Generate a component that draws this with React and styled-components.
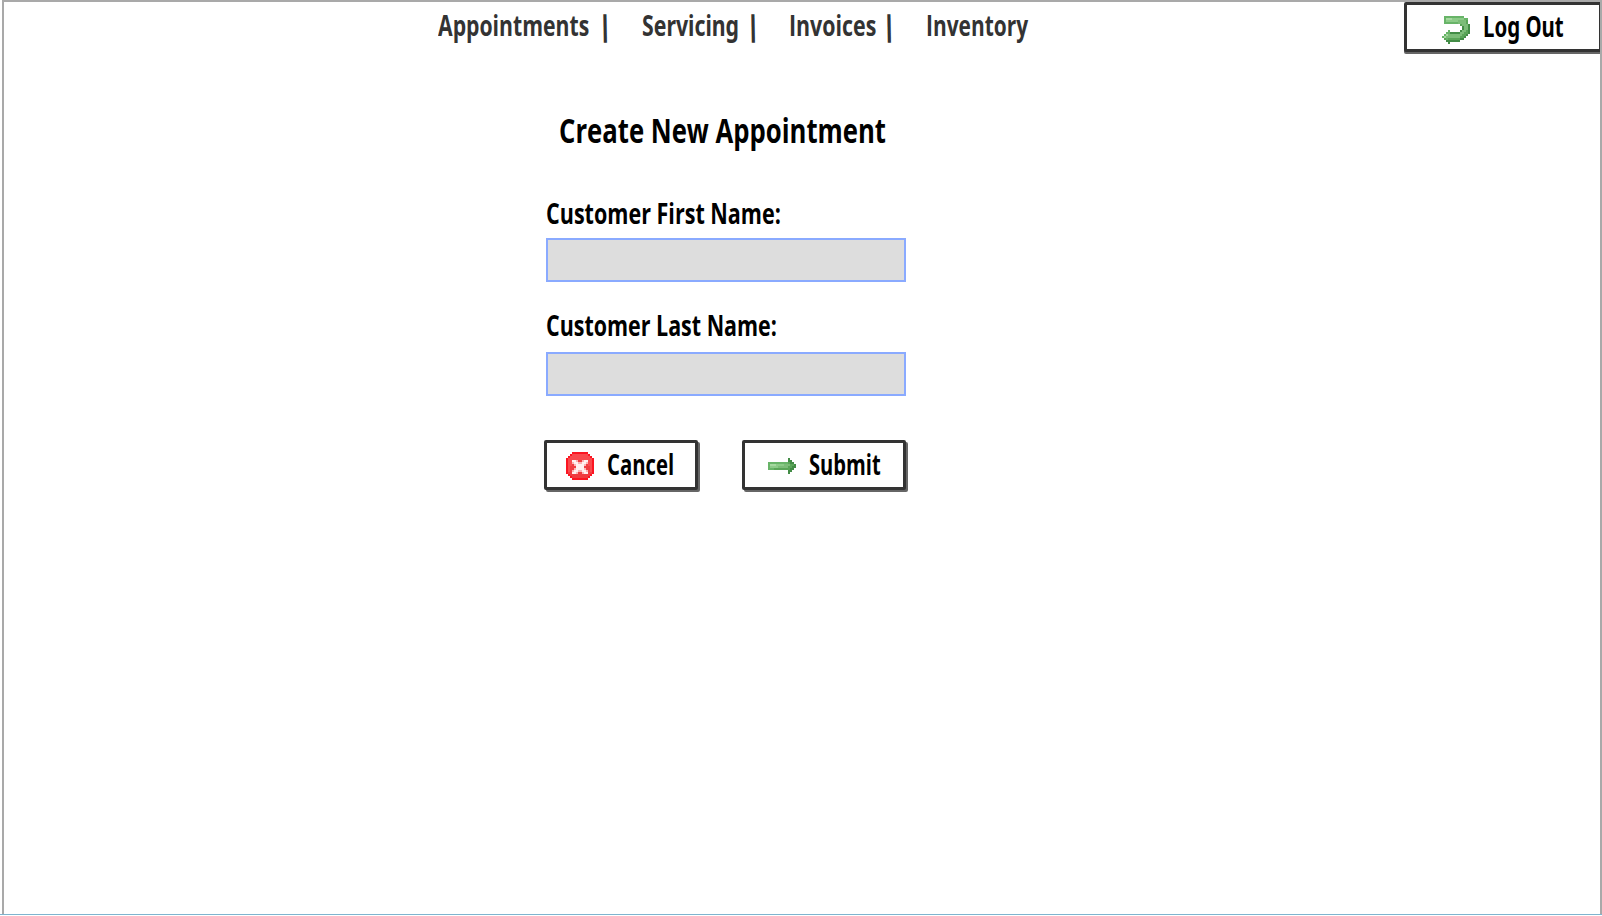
import React, { useLayoutEffect, useRef, useState } from "react";
import styled, { createGlobalStyle } from "styled-components";

const GlobalStyle = createGlobalStyle`
  * { box-sizing: border-box; }
  body { margin: 0; background: #fff; overflow: hidden; }
`;

const Page = styled.div`
  width: 1602px;
  height: 915px;
  padding-left: 2px;
  border-bottom: 1px solid #7fb4cf;
  background: #fff;
`;

const Frame = styled.div`
  height: 914px;
  border: 2px solid #a9a9a9;
  border-bottom: 0;
`;

const Header = styled.header`
  display: flex;
  height: 52px;
  padding-left: 434px;
`;

const Nav = styled.nav`
  display: flex;
  padding-top: 3px;
  flex: 1;
  color: #333;
`;

const NavLink = styled.a`
  display: block;
  width: ${(p) => p.$width}px;
  color: inherit;
  text-decoration: none;
`;

const Divider = styled.span`
  display: flex;
  justify-content: center;
  width: 4px;
  height: 40px;
  margin: 0 ${(p) => p.$after}px 0 ${(p) => p.$before}px;
  font: 700 29px/40px "Open Sans", "Liberation Sans", sans-serif;
  transform: rotate(-1deg);
`;

const TextBox = styled.span`
  display: block;
  width: ${(p) => p.$width}px;
  height: ${(p) => p.$line}px;
  line-height: ${(p) => p.$line}px;
  font-family: ${(p) => (p.$round ? '"Noto Sans"' : '"Open Sans"')}, "Liberation Sans", sans-serif;
  font-size: ${(p) => p.$size}px;
  font-weight: 700;
  white-space: nowrap;
`;

const Squeezed = styled.span`
  display: inline-block;
  transform-origin: 0 50%;
`;

/* Condenses a line of text horizontally to the width it is given. */
function Fit({ width, size = 28.5, line = 40, round = false, children }) {
  const ref = useRef(null);
  const [scale, setScale] = useState(1);
  useLayoutEffect(() => {
    setScale(width / ref.current.offsetWidth);
  }, [width, children]);
  return (
    <TextBox $width={width} $size={size} $line={line} $round={round}>
      <Squeezed ref={ref} style={{ transform: `scaleX(${scale})` }}>
        {children}
      </Squeezed>
    </TextBox>
  );
}

const Button = styled.button`
  display: flex;
  align-items: center;
  width: ${(p) => p.$width}px;
  height: 50px;
  padding: 0 0 0 ${(p) => p.$inset}px;
  border: 3px solid #333;
  border-right-width: ${(p) => (p.$docked ? 1 : 3)}px;
  border-radius: ${(p) => (p.$docked ? "2px 0 0 2px" : "2px")};
  background: #fff;
  box-shadow: ${(p) => (p.$docked ? "0 2px 0 #666" : "2px 2px 0 #666")};
  color: #000;
`;

const ButtonLabel = styled.span`
  margin-left: ${(p) => p.$gap}px;
  padding-bottom: 3px;
`;

const Form = styled.form`
  width: 362px;
  margin: 52px 0 0 540px;
  color: #000;
`;

const Title = styled.h1`
  margin: 0 0 41px;
  padding-left: 15px;
`;

const Field = styled.label`
  display: block;
  margin-bottom: 25px;
  padding-left: 2px;
`;

const Input = styled.input`
  display: block;
  width: 360px;
  height: 44px;
  margin-top: ${(p) => p.$gap}px;
  padding: 0 8px;
  border: 2px solid #8aaaff;
  border-radius: 0;
  background: #ddd;
  outline: none;
`;

const Actions = styled.div`
  display: flex;
  justify-content: space-between;
  margin-top: 44px;
`;

const Icon = styled.svg`
  display: block;
  flex: none;
  margin-top: ${(p) => p.$drop * 2}px;
`;

const PALETTE = {
  r: "#fb1622", e: "#f94a4e", m: "#f03c40", p: "#fbb4b4", w: "#fff0f0",
  a: "#68b468", b: "#8ccb88", c: "#a6d8a0", d: "#5aa558", g: "#438c46", h: "#7cbc78",
};

const STOP = [
  "...rrrrrrrr...",
  "..reeeeeeeer..",
  ".reeeeeeeeeer.",
  "reeeeeeeeeeeer",
  "reewwpmmpwweer",
  "reepwwppwwpeer",
  "reempwwwwpmeer",
  "remmmwwwwmmmer",
  "remmpwwwwpmmer",
  "rempwwppwwpmer",
  "rmmwwpmmpwwmmr",
  ".rmmmmmmmmmmr.",
  "..rmmmmmmmmr..",
  "...rrrrrrrr...",
];

const ARROW = [
  "..........g...",
  "..........gg..",
  "aaaaaaaaaadgg.",
  "acccbbbbhhhddg",
  "abbbbhhhhhddgg",
  "aaaddddddddgg.",
  "..........gg..",
  "..........g...",
];

const RETURN = [
  ".aaaaaaaaaa...",
  ".acccbbbbbbaa.",
  ".abbbbbbhhhhd.",
  ".aaaaaaahhhhd.",
  ".........dhhhg",
  "..........ghhg",
  "..........ghhg",
  "...a.....ghhdg",
  "..aaggggghhddg",
  ".achhhhhhhddg.",
  "achhhhhhhddg..",
  ".daddddddgg...",
  "..ggggggg.....",
  "...g..........",
];

function PixelIcon({ map, drop = 1 }) {
  return (
    <Icon $drop={drop} width={28} height={map.length * 2} viewBox={`0 0 14 ${map.length}`} shapeRendering="crispEdges" aria-hidden="true">
      {map.flatMap((row, y) =>
        [...row].map((key, x) =>
          PALETTE[key] ? <rect key={`${x}-${y}`} x={x} y={y} width="1" height="1" fill={PALETTE[key]} /> : null
        )
      )}
    </Icon>
  );
}

export default function App() {
  return (
    <Page>
      <GlobalStyle />
      <Frame>
        <Header>
          <Nav>
            <NavLink $width={151}><Fit width={151}>Appointments</Fit></NavLink>
            <Divider $before={14} $after={35}>|</Divider>
            <NavLink $width={97}><Fit width={97} round>Servicing</Fit></NavLink>
            <Divider $before={12} $after={34}>|</Divider>
            <NavLink $width={88}><Fit width={87}>Invoices</Fit></NavLink>
            <Divider $before={10} $after={35}>|</Divider>
            <NavLink $width={103}><Fit width={102}>Inventory</Fit></NavLink>
          </Nav>
          <Button type="button" $width={196} $inset={35} $docked>
            <PixelIcon map={RETURN} drop={3} />
            <ButtonLabel $gap={13}><Fit width={81} round>Log Out</Fit></ButtonLabel>
          </Button>
        </Header>
        <Form>
          <Title><Fit width={327} size={34.5} line={48}>Create New Appointment</Fit></Title>
          <Field>
            <Fit width={235} line={36}>Customer First Name:</Fit>
            <Input $gap={7} />
          </Field>
          <Field>
            <Fit width={231} line={36}>Customer Last Name:</Fit>
            <Input $gap={9} />
          </Field>
          <Actions>
            <Button type="button" $width={154} $inset={19}>
              <PixelIcon map={STOP} />
              <ButtonLabel $gap={13}><Fit width={67}>Cancel</Fit></ButtonLabel>
            </Button>
            <Button type="button" $width={164} $inset={23}>
              <PixelIcon map={ARROW} />
              <ButtonLabel $gap={13}><Fit width={72}>Submit</Fit></ButtonLabel>
            </Button>
          </Actions>
        </Form>
      </Frame>
    </Page>
  );
}
